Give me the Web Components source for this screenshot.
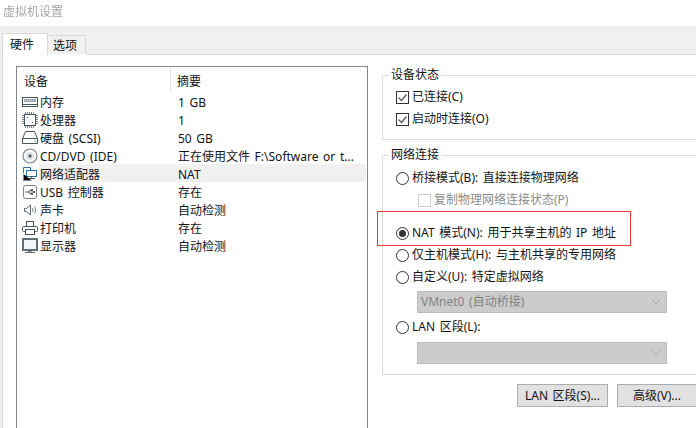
<!DOCTYPE html>
<html lang="zh">
<head>
<meta charset="utf-8">
<title>虚拟机设置</title>
<style>
    html, body{
        margin: 0;
        height: 100%;
        overflow: hidden;
        background-color: #fff;
        color: #141414;
        font: 12px/16px "Noto Sans", "Noto Sans CJK SC", sans-serif;
        word-spacing: 1.5px;
    }
</style>
</head>
<body>
<vm-settings heading="虚拟机设置">
    <vm-tabs slot="tabs"></vm-tabs>

    <device-list slot="left">
        <device-row icon="memory" name="内存" summary="1 GB"></device-row>
        <device-row icon="cpu" name="处理器" summary="1"></device-row>
        <device-row icon="disk" name="硬盘 (SCSI)" summary="50 GB"></device-row>
        <device-row icon="cd" name="CD/DVD (IDE)" summary="正在使用文件 F:\Software or t..."></device-row>
        <device-row icon="net" name="网络适配器" summary="NAT" selected></device-row>
        <device-row icon="usb" name="USB 控制器" summary="存在"></device-row>
        <device-row icon="sound" name="声卡" summary="自动检测"></device-row>
        <device-row icon="printer" name="打印机" summary="存在"></device-row>
        <device-row icon="display" name="显示器" summary="自动检测"></device-row>
    </device-list>

    <vm-group slot="right" legend="设备状态" class="first">
        <vm-option type="check" checked>已连接(C)</vm-option>
        <vm-option type="check" checked>启动时连接(O)</vm-option>
    </vm-group>

    <vm-group slot="right" legend="网络连接" class="second">
        <vm-option type="radio">桥接模式(B): 直接连接物理网络</vm-option>
        <vm-option type="check" indent disabled>复制物理网络连接状态(P)</vm-option>
        <vm-option type="radio" checked style="margin-top:11px">NAT 模式(N): 用于共享主机的 IP 地址</vm-option>
        <vm-option type="radio">仅主机模式(H): 与主机共享的专用网络</vm-option>
        <vm-option type="radio">自定义(U): 特定虚拟网络</vm-option>
        <vm-select style="margin-top:3px">VMnet0 (自动桥接)</vm-select>
        <vm-option type="radio" style="margin-top:3px">LAN 区段(L):</vm-option>
        <vm-select style="margin-top:4px"></vm-select>
    </vm-group>

    <vm-buttons slot="right">
        <vm-button style="width:91px">LAN 区段(S)...</vm-button>
        <vm-button style="width:80px">高级(V)...</vm-button>
    </vm-buttons>

    <vm-callout slot="over"></vm-callout>
</vm-settings>

<script>
// all the little device pictures from the tree on the left, drawn on a 16x16 box
const ICONS = {
    memory: `<rect x=".5" y="3.5" width="15" height="9" fill="#fff" stroke="#46545f"/>
             <rect x="2" y="5" width="12" height="3" fill="#96a2ac"/>
             <path d="M3 6.500h1M5 6.500h1M7 6.500h1M9 6.500h1M11 6.500h1" stroke="#e8ecef"/>
             <path d="M1 10.500h14" stroke="#46545f"/>`,
    cpu: `<rect x="2.500" y="2.500" width="11" height="11" fill="#fff" stroke="#46545f"/>
          <path d="M3.500 0v2M5.500 0v2M7.500 0v2M9.500 0v2M11.500 0v2M3.500 14v2M5.500 14v2M7.500 14v2M9.500 14v2M11.500 14v2M0 3.500h2M0 5.500h2M0 7.500h2M0 9.500h2M0 11.500h2M14 3.500h2M14 5.500h2M14 7.500h2M14 9.500h2M14 11.500h2" stroke="#7d8a96"/>
          <path d="M5 5h1v1H5zM10 10h1v1h-1z" fill="#46545f"/>`,
    disk: `<path d="M3.500 1.500h9l3 7v5h-15v-5z" fill="#fff" stroke="#46545f"/>
           <path d="M.5 8.500h15" stroke="#46545f"/>
           <path d="M12 11h2" stroke="#7d8a94"/>`,
    cd: `<circle cx="8" cy="8" r="7" fill="#fff" stroke="#76828c" stroke-width="1.200"/>
         <circle cx="8" cy="8" r="4" fill="#dfe3e6"/>
         <circle cx="8" cy="8" r="1.700" fill="#5d6972"/>`,
    net: `<path d="M1.500 7V1.500h7v3" fill="#fff" stroke="#2f6f9f"/>
          <rect x="4.500" y="4.500" width="10" height="6" fill="#fff" stroke="#2f6f9f"/>
          <path d="M9.500 10.500v2M6 12.500h7" stroke="#46545f"/>
          <path d="M1.500 8v6.500h8" stroke="#8d99a3" stroke-dasharray="1 1"/>`,
    usb: `<rect x="1.500" y="1.500" width="13" height="13" rx="2" fill="#fff" stroke="#76828c"/>
          <path d="M3 8h8M6 8l2-2h1M6 8l2 2h1" fill="none" stroke="#5d6972"/>
          <path d="M11 7h2v2h-2zM9 5h2v2H9zM9 9h2v2H9z" fill="#5d6972"/>`,
    sound: `<path d="M2.500 6.500h2l4-3.500v10l-4-3.500h-2z" fill="#fff" stroke="#5d6972"/>
            <path d="M10.500 6c.7 1.300.7 2.700 0 4M12.500 4.500c1.300 2.300 1.300 4.700 0 7" fill="none" stroke="#76828c"/>`,
    printer: `<rect x="4.500" y="1.500" width="7" height="5" fill="#fff" stroke="#46545f"/>
              <path d="M3.500 11.500h-2a1 1 0 0 1-1-1v-3a1 1 0 0 1 1-1h13a1 1 0 0 1 1 1v3a1 1 0 0 1-1 1h-2" fill="#fff" stroke="#46545f"/>
              <rect x="3.500" y="9.500" width="9" height="5" fill="#fff" stroke="#46545f"/>`,
    display: `<rect x="1" y="1" width="14" height="11" fill="#f4f6f7" stroke="#5d6e78" stroke-width="2"/>
              <path d="M6 13h4v1H6z" fill="#8d99a3"/>
              <path d="M3 14.500h10" stroke="#5d6e78"/>`
};

class VmSettings extends HTMLElement{
    constructor(){
        super();
        this.attachShadow({mode:'open'});
        this.shadowRoot.innerHTML = `
            <style>
                :host{
                    display: flex;
                    flex-direction: column;
                    position: relative;
                    height: 428px;
                }
                .title{
                    height: 26px;
                    padding: 4px 0 0 3px;
                    box-sizing: border-box;
                    line-height: 16px;
                    color: #a6a6a6;
                    filter: blur(.35px);
                }
                .page{
                    flex: 1;
                    display: flex;
                    flex-direction: column;
                    min-height: 0;
                    background-color: #f0f0f0;
                    padding: 7px 0 0 2px;
                }
                .panel{
                    flex: 1;
                    display: flex;
                    gap: 14px;
                    min-height: 0;
                    background-color: #fff;
                    border-left: 1px solid #d9d9d9;
                    padding: 12px 0 0 13px;
                }
                .right{
                    display: flex;
                    flex-direction: column;
                    width: 318px;
                    flex: none;
                    margin-top: 1px;
                }
            </style>
            <div class="title">${this.getAttribute('heading')}</div>
            <div class="page">
                <slot name="tabs"></slot>
                <div class="panel">
                    <slot name="left"></slot>
                    <div class="right"><slot name="right"></slot></div>
                </div>
            </div>
            <slot name="over"></slot>
        `;
    }
}

class VmTabs extends HTMLElement{
    constructor(){
        super();
        this.attachShadow({mode:'open'});
        this.shadowRoot.innerHTML = `
            <style>
                :host{
                    display: flex;
                    align-items: flex-end;
                    height: 21px;
                    position: relative;
                    z-index: 1;
                }
                :host::after{
                    content: '';
                    flex: 1;
                    align-self: flex-end;
                    border-bottom: 1px solid #d9d9d9;
                    margin-bottom: -1px;
                }
                div{
                    box-sizing: border-box;
                    border: 1px solid #d9d9d9;
                }
                .on{
                    width: 46px;
                    height: 22px;
                    margin-bottom: -1px;
                    padding: 3px 0 0 7px;
                    background-color: #fff;
                    border-bottom: 0;
                }
                .off{
                    width: 39px;
                    height: 19px;
                    margin-left: -1px;
                    padding: 2px 0 0 5px;
                    background-color: #f0f0f0;
                    border-bottom: 0;
                }
            </style>
            <div class="on">硬件</div>
            <div class="off">选项</div>
        `;
    }
}

class DeviceList extends HTMLElement{
    constructor(){
        super();
        this.attachShadow({mode:'open'});
        this.shadowRoot.innerHTML = `
            <style>
                :host{
                    display: block;
                    box-sizing: border-box;
                    width: 352px;
                    height: 100%;
                    flex: none;
                    padding: 0 1px 0 0;
                    border: 1px solid #828790;
                    border-bottom: 0;
                }
                .head{
                    display: flex;
                    height: 25px;
                    padding-top: 7px;
                    box-sizing: border-box;
                    line-height: 16px;
                }
                .head span:first-child{
                    width: 154px;
                    padding-left: 7px;
                    box-sizing: border-box;
                    border-right: 1px solid #e5e5e5;
                    margin-top: -7px;
                    padding-top: 7px;
                }
                .head span:last-child{
                    padding-left: 6px;
                }
            </style>
            <div class="head"><span>设备</span><span>摘要</span></div>
            <slot></slot>
        `;
    }
}

class DeviceRow extends HTMLElement{
    constructor(){
        super();
        this.attachShadow({mode:'open'});
        const selected = this.hasAttribute('selected');
        this.shadowRoot.innerHTML = `
            <style>
                :host{
                    display: flex;
                    align-items: center;
                    height: 18px;
                    padding-left: 5px;
                }
                svg{
                    width: 16px;
                    height: 16px;
                    flex: none;
                    margin-top: 2px;
                }
                .cells{
                    flex: 1;
                    display: flex;
                    box-sizing: border-box;
                    height: 100%;
                    align-items: center;
                    margin-left: 1px;
                    padding: 3px 0 0 1px;
                    background-color: ${selected ? '#f0f0f0' : 'transparent'};
                }
                .name{
                    width: 138px;
                    flex: none;
                }
            </style>
            <svg viewBox="0 0 16 16">${ICONS[this.getAttribute('icon')]}</svg>
            <div class="cells">
                <span class="name">${this.getAttribute('name')}</span>
                <span>${this.getAttribute('summary')}</span>
            </div>
        `;
    }
}

class VmGroup extends HTMLElement{
    constructor(){
        super();
        this.attachShadow({mode:'open'});
        this.shadowRoot.innerHTML = `
            <style>
                :host{
                    display: block;
                }
                :host(.first){
                    margin-bottom: 7px;
                }
                :host(.first) fieldset{
                    padding: 3px 0 9px 13px;
                }
                :host(.second) fieldset{
                    padding: 4px 0 10px 13px;
                }
                fieldset{
                    margin: 0;
                    min-width: 0;
                    border: 1px solid #dcdcdc;
                }
                legend{
                    margin-left: -7px;
                    padding: 0 2px;
                    line-height: 16px;
                }
            </style>
            <fieldset>
                <legend>${this.getAttribute('legend')}</legend>
                <slot></slot>
            </fieldset>
        `;
    }
}

class VmOption extends HTMLElement{
    constructor(){
        super();
        this.attachShadow({mode:'open'});
        const isRadio = this.getAttribute('type') === 'radio';
        const checked = this.hasAttribute('checked');
        const disabled = this.hasAttribute('disabled');
        const box = isRadio
            ? `<circle cx="6.500" cy="6.500" r="6" fill="#fff" stroke="#333"/>
               ${checked ? '<circle cx="6.500" cy="6.500" r="3.500" fill="#333"/>' : ''}`
            : `<rect x=".5" y=".5" width="12" height="12" fill="#fff" stroke="${disabled ? '#cccccc' : '#333'}"/>
               ${checked ? '<path d="M2.500 6.500l3 3 5-6" fill="none" stroke="#555" stroke-width="1.200"/>' : ''}`;
        this.shadowRoot.innerHTML = `
            <style>
                :host{
                    display: flex;
                    align-items: center;
                    gap: 3px;
                    height: 22px;
                    color: ${disabled ? '#8c8c8c' : 'inherit'};
                }
                :host([indent]){
                    margin-left: 22px;
                }
                svg{
                    width: 13px;
                    height: 13px;
                    flex: none;
                }
            </style>
            <svg viewBox="0 0 13 13">${box}</svg>
            <slot></slot>
        `;
    }
}

class VmSelect extends HTMLElement{
    constructor(){
        super();
        this.attachShadow({mode:'open'});
        this.shadowRoot.innerHTML = `
            <style>
                :host{
                    display: flex;
                    align-items: center;
                    justify-content: space-between;
                    box-sizing: border-box;
                    width: 250px;
                    height: 22px;
                    margin-left: 21px;
                    padding: 0 5px 0 3px;
                    background-color: #cccccc;
                    border: 1px solid #bcbcbc;
                    color: #838383;
                }
                svg{
                    width: 10px;
                    height: 6px;
                    flex: none;
                }
            </style>
            <span><slot></slot></span>
            <svg viewBox="0 0 10 6"><path d="M1 .8l4 4 4-4" fill="none" stroke="#a0a0a0"/></svg>
        `;
    }
}

class VmButtons extends HTMLElement{
    constructor(){
        super();
        this.attachShadow({mode:'open'});
        this.shadowRoot.innerHTML = `
            <style>
                :host{
                    display: flex;
                    justify-content: flex-end;
                    gap: 9px;
                    margin-top: 9px;
                    margin-right: 3px;
                }
            </style>
            <slot></slot>
        `;
    }
}

class VmButton extends HTMLElement{
    constructor(){
        super();
        this.attachShadow({mode:'open'});
        this.shadowRoot.innerHTML = `
            <style>
                :host{
                    display: flex;
                    align-items: center;
                    justify-content: center;
                    box-sizing: border-box;
                    height: 23px;
                    background-color: #e1e1e1;
                    border: 1px solid #adadad;
                }
            </style>
            <slot></slot>
        `;
    }
}

// the red box somebody drew on the screenshot, it lies over the radio rows
class VmCallout extends HTMLElement{
    constructor(){
        super();
        this.attachShadow({mode:'open'});
        this.shadowRoot.innerHTML = `
            <style>
                :host{
                    position: absolute;
                    left: 377px;
                    top: 211px;
                    width: 252px;
                    height: 33px;
                    border: 1px solid #e8393a;
                }
            </style>
        `;
    }
}

customElements.define('vm-settings', VmSettings);
customElements.define('vm-tabs', VmTabs);
customElements.define('device-list', DeviceList);
customElements.define('device-row', DeviceRow);
customElements.define('vm-group', VmGroup);
customElements.define('vm-option', VmOption);
customElements.define('vm-select', VmSelect);
customElements.define('vm-buttons', VmButtons);
customElements.define('vm-button', VmButton);
customElements.define('vm-callout', VmCallout);
</script>
</body>
</html>
